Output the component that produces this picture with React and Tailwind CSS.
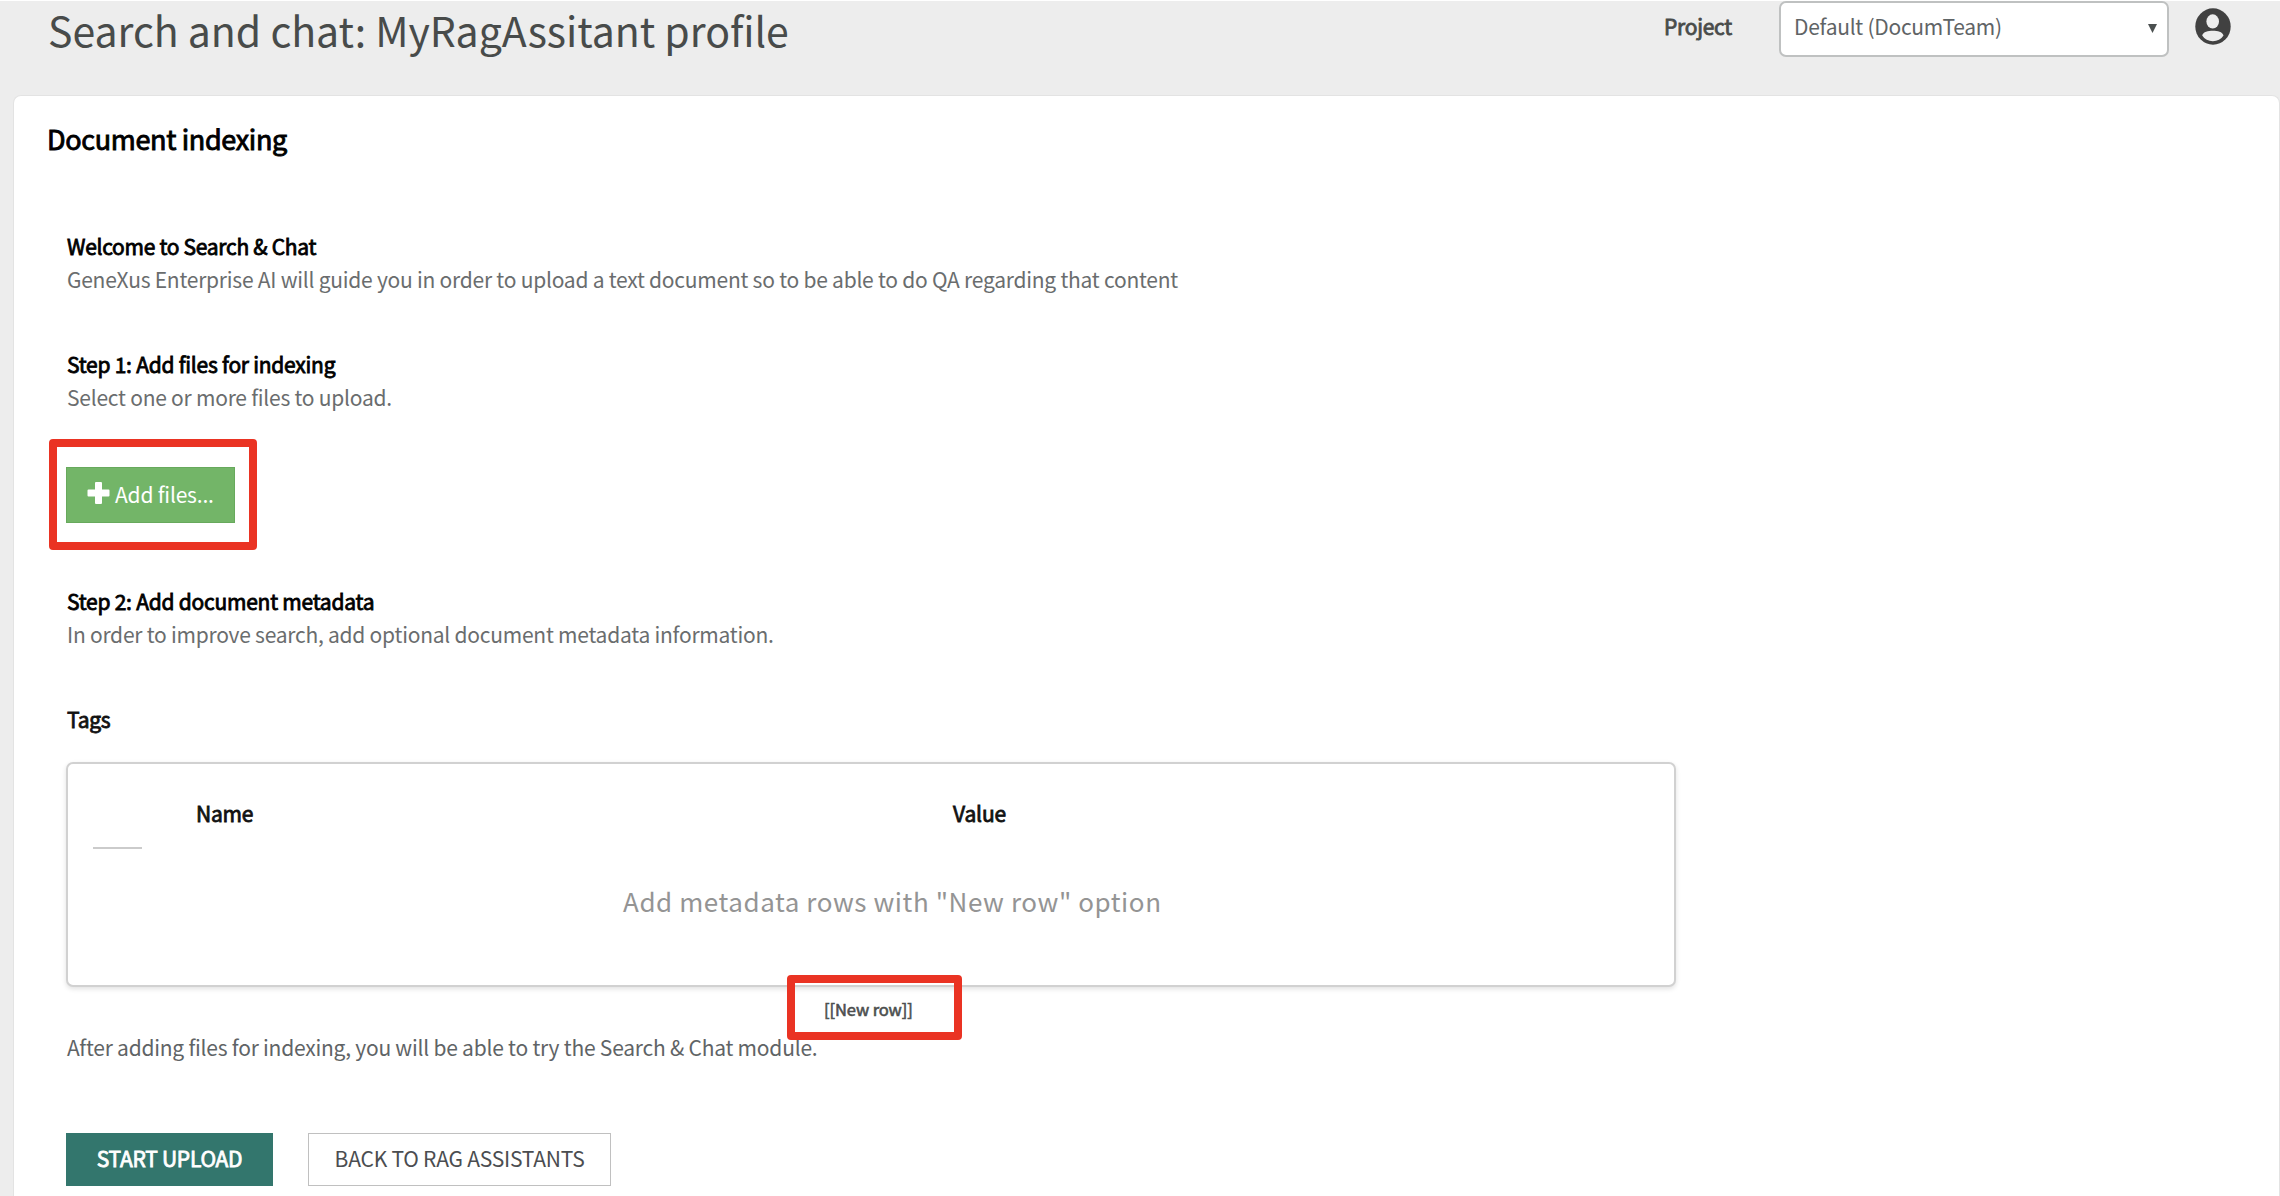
function UserCircle() {
  return (
    <svg viewBox="0 0 24 24" className="ml-[26px] mt-[7px] h-[37px] w-[36px]" preserveAspectRatio="none">
      <ellipse cx="12" cy="12" rx="11.8" ry="11.8" fill="#414141" />
      <ellipse cx="11.8" cy="8.700" rx="4.200" ry="4.600" fill="#ededed" />
      <path d="M4.800 17.900c.600-2.500 4-3.100 7.100-3.100s6.500.600 7.100 3.100c-1.500 2.400-4.200 3.600-7.100 3.600s-5.600-1.200-7.100-3.600z" fill="#ededed" />
    </svg>
  );
}

function Header() {
  return (
    <header className="flex h-[95px] items-start border-t border-white bg-[#ededed] pl-12">
      <h1 className="w-[1616px] text-[41px] leading-[57px] tracking-[-0.03px] text-[#484b4a]">
        Search and chat: MyRagAssitant profile
      </h1>
      <div className="mt-px w-[115px] text-[21px] leading-[49px] tracking-[-0.25px] text-[#484b4a] [-webkit-text-stroke:0.8px_#484b4a]">
        Project
      </div>
      <div className="flex h-[56px] w-[390px] items-start rounded-[7px] border-2 border-[#bfc1c1] bg-white pl-[13px] pr-[10px]">
        <span className="flex-1 text-[21px] leading-[46px] tracking-[-0.27px] text-[#5f6466]">
          Default (DocumTeam)
        </span>
        <svg viewBox="0 0 9 9" className="mt-[21px] h-[9px] w-[9px]">
          <path d="M0 0h9L4.500 9z" fill="#4b5050" />
        </svg>
      </div>
      <UserCircle />
    </header>
  );
}

function Step({ title, titleClass, children }) {
  return (
    <div className="pl-px text-[21px] leading-[33px] tracking-[-0.24px]">
      <h3 className={"text-black [-webkit-text-stroke:0.8px_#000] " + (titleClass || "")}>{title}</h3>
      <p className="text-[#6a6d6e]">{children}</p>
    </div>
  );
}

function TagsTable() {
  return (
    <div className="mt-[26px] h-[225px] w-[1610px] rounded-[7px] border-2 border-[#d1d1d1] bg-white shadow-[0_2px_5px_rgba(0,0,0,0.12)]">
      <div className="flex pt-[31px] pl-[25px] text-[21px] leading-[36px] text-[#111] [-webkit-text-stroke:0.8px_#111]">
        <div className="mt-[52px] h-[2px] w-[49px] bg-[#cbcbcb]" />
        <div className="ml-[54px] w-[757px] tracking-[-0.2px]">Name</div>
        <div className="tracking-[-0.15px]">Value</div>
      </div>
      <p className="mt-[32px] ml-[555px] text-[26px] leading-[40px] tracking-[0.57px] text-[#949494]">
        Add metadata rows with "New row" option
      </p>
    </div>
  );
}

export default function App() {
  return (
    <div className="h-[1196px] w-[2280px] overflow-hidden bg-[#ededed] font-['Noto_Sans_CJK_SC','Noto_Sans',sans-serif]">
      <Header />
      <main className="ml-[13px] h-[1120px] rounded-t-[8px] border border-b-0 border-[#e3e3e3] bg-white">
        <h2 className="mt-[23px] ml-[33px] text-[27px] leading-[40px] tracking-[-0.34px] text-black [-webkit-text-stroke:0.9px_#000]">
          Document indexing
        </h2>
        <div className="ml-[52px] mt-[71px]">
          <Step title="Welcome to Search & Chat" titleClass="tracking-[-0.29px]">
            GeneXus Enterprise AI will guide you in order to upload a text document so to be able to do QA
            regarding that content
          </Step>
          <div className="mt-[52px]">
            <Step title="Step 1: Add files for indexing">Select one or more files to upload.</Step>
          </div>
          <div className="relative mt-[53px] h-[56px] w-[169px]">
            <button className="flex h-[56px] w-[169px] items-center border border-[#67a95c] bg-[#73b568] pl-[20px] text-white">
              <svg viewBox="0 0 22 22" className="-mt-[4px] h-[22px] w-[23px]">
                <path
                  d="M8.500 0h5a1 1 0 0 1 1 1v6.500H21a1 1 0 0 1 1 1v5a1 1 0 0 1-1 1h-6.500V21a1 1 0 0 1-1 1h-5a1 1 0 0 1-1-1v-6.500H1a1 1 0 0 1-1-1v-5a1 1 0 0 1 1-1h6.500V1a1 1 0 0 1 1-1z"
                  fill="#fff"
                />
              </svg>
              <span className="-mt-[2px] ml-[5px] text-[21px] leading-[30px] tracking-[-0.2px]">Add files...</span>
            </button>
            <div className="absolute -left-[17px] -top-[28px] h-[111px] w-[208px] rounded-[4px] border-8 border-[#ea3323]" />
          </div>
          <div className="mt-[62px]">
            <Step title="Step 2: Add document metadata">
              In order to improve search, add optional document metadata information.
            </Step>
          </div>
          <h3 className="mt-[52px] pl-px text-[21px] leading-[33px] tracking-[-0.25px] text-[#111] [-webkit-text-stroke:0.8px_#111]">
            Tags
          </h3>
          <TagsTable />
          <div className="relative flex h-[44px] pl-[758px] pt-[7px]">
            <span className="text-[16.5px] leading-[30px] tracking-[-0.1px] text-[#4c4f4f] [-webkit-text-stroke:0.6px_#4c4f4f]">
              [[New row]]
            </span>
            <div className="absolute left-[721px] -top-[12px] h-[65px] w-[175px] rounded-[4px] border-8 border-[#ea3323]" />
          </div>
          <p className="pl-px text-[21px] leading-[33px] tracking-[-0.23px] text-[#5f6466]">
            After adding files for indexing, you will be able to try the Search & Chat module.
          </p>
          <div className="mt-[69px] flex text-[21px] leading-[48px]">
            <button className="h-[53px] w-[207px] bg-[#33766d] pb-[3px] tracking-[-0.25px] text-white [-webkit-text-stroke:0.8px_#fff]">
              START UPLOAD
            </button>
            <button className="ml-[35px] h-[53px] w-[303px] border border-[#c0c0c0] bg-white pb-[3px] tracking-[-0.22px] text-[#4b4d50]">
              BACK TO RAG ASSISTANTS
            </button>
          </div>
        </div>
      </main>
    </div>
  );
}
